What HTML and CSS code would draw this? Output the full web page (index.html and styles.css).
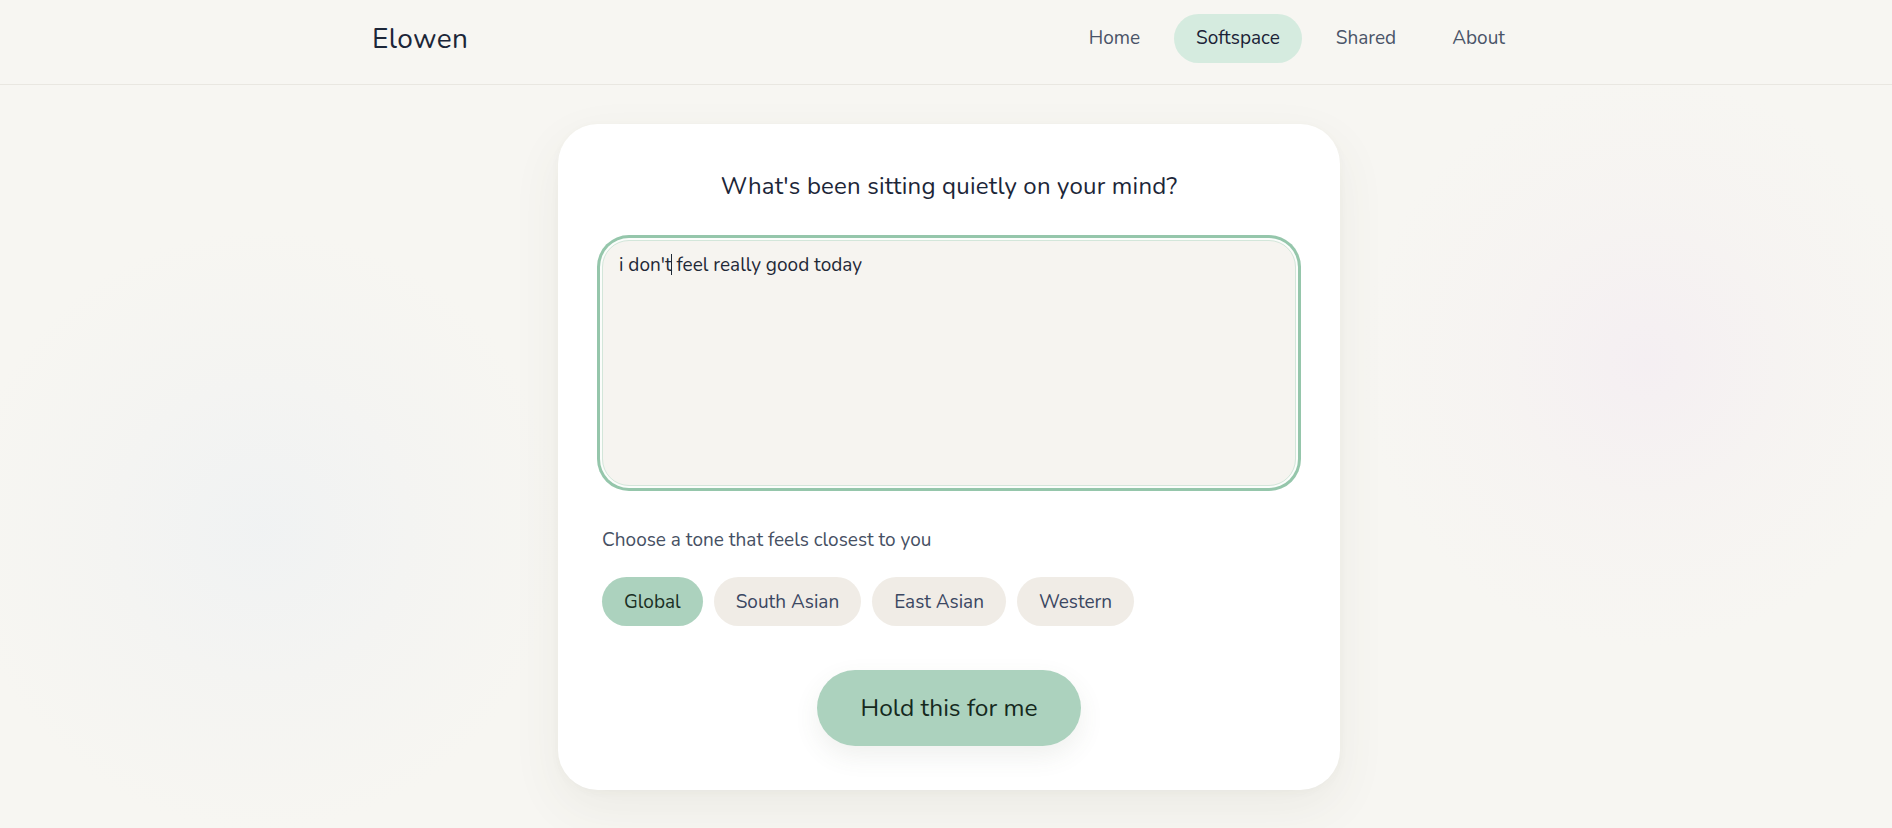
FILE: index.html
```html
<!DOCTYPE html>
<html lang="en">
<head>
<meta charset="utf-8">
<title>Elowen — Softspace</title>
<link rel="stylesheet" href="styles.css">
</head>
<body>
  <header class="site-header">
    <div class="header-inner">
      <div class="brand">Elowen</div>
      <nav class="nav">
        <a class="nav-link" href="#">Home</a>
        <a class="nav-link is-active" href="#">Softspace</a>
        <a class="nav-link" href="#">Shared</a>
        <a class="nav-link" href="#">About</a>
      </nav>
    </div>
  </header>

  <main class="main">
    <section class="card">
      <h1 class="card-title">What's been sitting quietly on your mind?</h1>

      <div class="entry">i don'<span class="caret-wrap">t<span class="caret"></span></span> feel really good today</div>

      <p class="tone-label">Choose a tone that feels closest to you</p>

      <div class="chips">
        <button class="chip is-selected">Global</button>
        <button class="chip">South Asian</button>
        <button class="chip">East Asian</button>
        <button class="chip">Western</button>
      </div>

      <div class="actions">
        <button class="hold-btn">Hold this for me</button>
      </div>
    </section>
  </main>
</body>
</html>
```

FILE: styles.css
```css
* {
  box-sizing: border-box;
}

html, body {
  margin: 0;
  padding: 0;
}

body {
  min-height: 828px;
  font-family: "Nunito", "Lato", "Noto Sans", sans-serif;
  color: #1e293b;
  background-color: #f7f6f2;
  background-image:
    radial-gradient(circle at 262px 530px, rgba(238, 241, 243, 0.75) 0, rgba(241, 242, 242, 0.45) 160px, rgba(247, 246, 242, 0) 300px),
    radial-gradient(circle at 1646px 362px, rgba(244, 237, 242, 0.8) 0, rgba(245, 240, 241, 0.4) 150px, rgba(247, 246, 242, 0) 285px);
  overflow: hidden;
}

/* Header */
.site-header {
  border-bottom: 1px solid #e9e7e1;
  padding: 14px 0 21px 6px;
}

.header-inner {
  width: 1156px;
  margin: 0 auto;
  display: flex;
  align-items: center;
  justify-content: space-between;
}

.brand {
  font-size: 28px;
  letter-spacing: 0.4px;
  color: #1c2638;
  padding-left: 1px;
}

.nav {
  display: flex;
  align-items: center;
  gap: 12px;
}

.nav-link {
  display: block;
  height: 49px;
  line-height: 49px;
  padding: 0 22px;
  border-radius: 999px;
  font-size: 19px;
  color: #4a5468;
  text-decoration: none;
}

.nav-link.is-active {
  background: #d5ebdf;
  color: #1a2236;
}

/* Card */
.main {
  display: flex;
  justify-content: center;
  padding: 39px 0 0 6px;
}

.card {
  width: 782px;
  background: #ffffff;
  border-radius: 40px;
  padding: 44px;
  box-shadow: 0 18px 50px rgba(90, 80, 50, 0.07), 0 2px 10px rgba(90, 80, 50, 0.03);
}

.card-title {
  margin: 0 0 36px;
  font-size: 24px;
  line-height: 36px;
  font-weight: 400;
  text-align: center;
  color: #1c2638;
  letter-spacing: 0.2px;
}

.entry {
  height: 246px;
  background: #f6f4f0;
  border: 1px solid #d3e6da;
  border-radius: 27px;
  box-shadow: 0 0 0 2px #fbfdfb, 0 0 0 5px #95c6ab;
  padding: 11px 16px;
  font-size: 19px;
  line-height: 27px;
  color: #1f2937;
}

.caret-wrap {
  position: relative;
}

.caret {
  position: absolute;
  right: 0;
  top: 2px;
  width: 1px;
  height: 21px;
  background: #1f2937;
}

.tone-label {
  margin: 41px 0 0;
  font-size: 19px;
  line-height: 27px;
  color: #465063;
}

.chips {
  display: flex;
  gap: 11px;
  margin-top: 23px;
}

.chip {
  height: 49px;
  padding: 0 22px;
  border: none;
  border-radius: 999px;
  background: #f0ece6;
  color: #3b4762;
  font-family: inherit;
  font-size: 19px;
  cursor: pointer;
}

.chip.is-selected {
  background: #acd2be;
  color: #1b2f24;
}

.actions {
  display: flex;
  justify-content: center;
  margin-top: 44px;
}

.hold-btn {
  height: 76px;
  padding: 0 44px;
  border: none;
  border-radius: 999px;
  background: #acd2be;
  color: #15291d;
  font-family: inherit;
  font-size: 24.5px;
  box-shadow: 0 10px 26px rgba(80, 90, 70, 0.09);
  cursor: pointer;
}
```
